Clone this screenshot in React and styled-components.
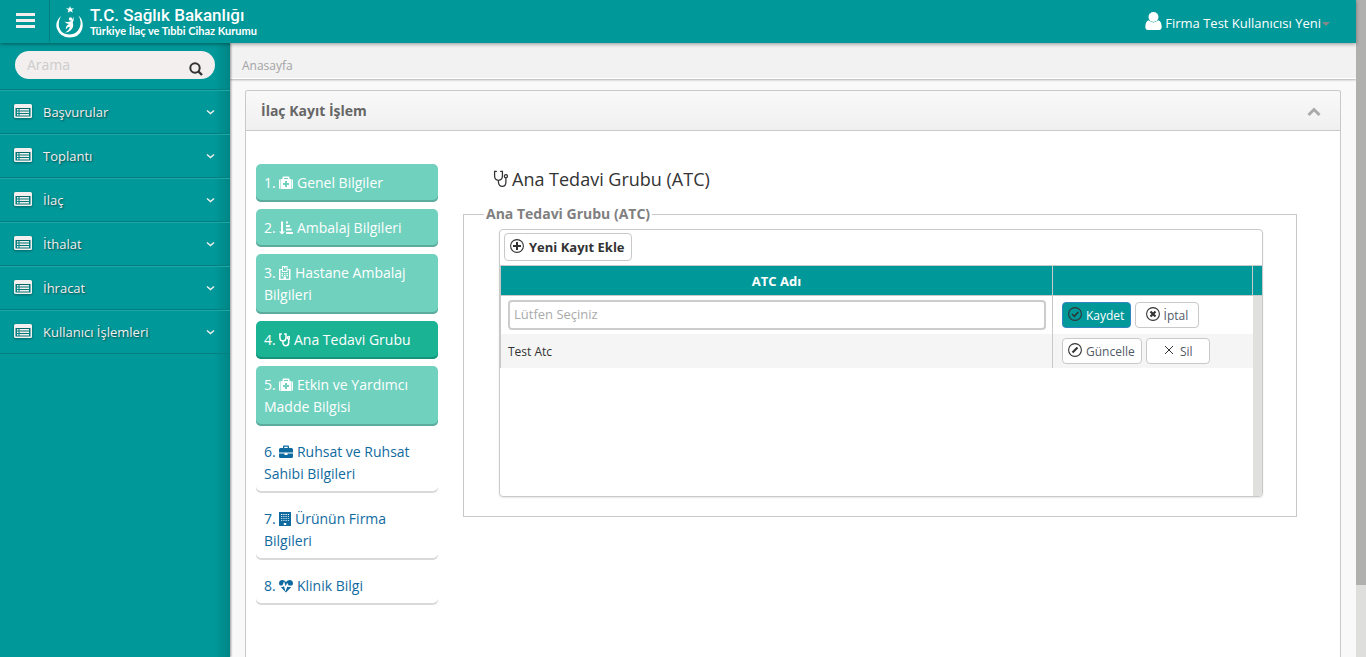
import React from "react";
import styled, { createGlobalStyle, css } from "styled-components";

const teal = "#009899";
const line = "#c9c9c9";

const GlobalStyle = createGlobalStyle`
  *, *::before, *::after { box-sizing: border-box; }
  html, body { margin: 0; overflow: hidden; }
  body, button, input {
    font-family: "Open Sans", "Noto Sans", sans-serif;
    font-size: 13px;
    color: #333;
  }
  a { color: inherit; text-decoration: none; }
  svg { display: block; flex: none; }
`;

const Window = styled.div`
  display: flex;
  height: 100vh;
  background: #f9f9f9;
`;

const Page = styled.div`
  flex: 1;
  min-width: 0;
  display: flex;
  flex-direction: column;
`;

const PageRail = styled.div`
  width: 10px;
  background: #dededc;
`;

const PageThumb = styled.div`
  height: 89%;
  background: #b0b0ae;
`;

const TopBar = styled.header`
  position: relative;
  z-index: 2;
  display: flex;
  align-items: center;
  height: 43px;
  flex: none;
  background: ${teal};
  box-shadow: 0 1px 4px rgba(0, 0, 0, 0.4);
  color: #fff;
`;

const MenuButton = styled.button`
  align-self: stretch;
  width: 50px;
  margin-bottom: 1px;
  padding: 0 0 1px 16px;
  border: 0;
  border-right: 1px solid #037f80;
  background: none;
`;

const Brand = styled.a`
  display: flex;
  align-items: center;
  gap: 6px;
  padding-left: 6px;
  white-space: nowrap;
`;

const BrandText = styled.span`
  display: flex;
  flex-direction: column;
`;

const BrandTitle = styled.span`
  font-family: Roboto, Arial, sans-serif;
  font-weight: 500;
  font-size: 17px;
  line-height: 18px;
`;

const BrandSub = styled.span`
  font-family: Lato, Arial, sans-serif;
  font-weight: 700;
  font-size: 11px;
  line-height: 14px;
`;

const UserButton = styled.button`
  display: flex;
  align-items: center;
  margin: 0 26px 0 auto;
  padding: 2px 0 0;
  gap: 3px;
  border: 0;
  background: none;
  color: #fff;
  line-height: 20px;
`;

const Caret = styled.span`
  margin: 3px 0 0 -2px;
  border: 4px solid transparent;
  border-top-color: #888;
  border-bottom: 0;
`;

const Shell = styled.div`
  flex: 1;
  min-height: 0;
  display: flex;
`;

const Sidebar = styled.aside`
  position: relative;
  z-index: 1;
  flex: none;
  width: 230px;
  background: linear-gradient(to left, #008586, ${teal} 16px);
  box-shadow: 1px 0 2px rgba(0, 0, 0, 0.4);
`;

const Search = styled.form`
  display: flex;
  align-items: center;
  height: 28px;
  margin: 8px 15px 10px;
  padding: 0 12px;
  border-radius: 14px;
  background: #f3efee;
`;

const SearchInput = styled.input`
  flex: 1;
  min-width: 0;
  padding: 0 0 2px;
  border: 0;
  outline: 0;
  background: none;
  font-size: 14px;
  &::placeholder { color: #ccc; }
`;

const SearchButton = styled.button`
  padding: 7px 0 0;
  border: 0;
  background: none;
`;

const SideMenu = styled.ul`
  margin: 0;
  padding: 0;
  list-style: none;
  border-top: 1px solid #047f80;
`;

const SideLink = styled.a`
  display: flex;
  align-items: center;
  gap: 11px;
  height: 44px;
  padding: 0 15px 0 14px;
  border-top: 1px solid #1aa6a6;
  border-bottom: 1px solid #047f80;
  color: #f3efee;
  text-shadow: 1px 1px 2px rgba(0, 0, 0, 0.5);
  span { flex: 1; }
  svg:first-child { margin-bottom: 3px; filter: drop-shadow(0 1px 1px rgba(0, 0, 0, 0.4)); }
`;

const Main = styled.main`
  flex: 1;
  min-width: 0;
  display: flex;
  flex-direction: column;
`;

const Breadcrumb = styled.nav`
  flex: none;
  height: 36px;
  padding: 13px 12px 0;
  line-height: 20px;
  font-size: 12px;
  color: #a3a3a3;
  background: #f2f2f2;
  border-bottom: 1px solid #fff;
  box-shadow: 0 1px 2px rgba(0, 0, 0, 0.3);
`;

const Panel = styled.section`
  flex: 1;
  margin: 11px 15px 0;
  border: 1px solid ${line};
  border-bottom: 0;
  border-radius: 3px 3px 0 0;
  background: #fff;
`;

const PanelHeader = styled.header`
  display: flex;
  align-items: center;
  justify-content: space-between;
  height: 40px;
  padding: 0 19px 0 15px;
  border-bottom: 1px solid ${line};
  border-radius: 3px 3px 0 0;
  background: linear-gradient(#f9f9f9, #f0f0f0);
`;

const PanelTitle = styled.h1`
  margin: 0;
  font-size: 14px;
  font-weight: 700;
  color: #666;
`;

const IconButton = styled.button`
  padding: 2px 0 0;
  border: 0;
  background: none;
`;

const PanelBody = styled.div`
  display: flex;
  gap: 25px;
  padding: 33px 43px 0 10px;
`;

const Steps = styled.ol`
  flex: none;
  width: 182px;
  margin: 0;
  padding: 0;
  list-style: none;
  display: flex;
  flex-direction: column;
  gap: 7px;
`;

const stepStates = {
  done: css`
    background: #70d1be;
    color: #fff;
    box-shadow: inset 0 -2px 0 #5cab9c;
  `,
  current: css`
    background: #1ab394;
    color: #fff;
    box-shadow: inset 0 -2px 0 #15937a;
  `,
  open: css`
    color: #0f6aa0;
    box-shadow: inset 0 -2px 0 #d9d9d9;
  `,
};

const StepLink = styled.a`
  display: block;
  padding: 8px;
  border-radius: 5px;
  font-size: 14px;
  line-height: 22px;
  ${(p) => stepStates[p.$state]}
  svg { display: inline-block; vertical-align: -2px; }
`;

const Content = styled.div`
  flex: 1;
  min-width: 0;
`;

const Heading = styled.h2`
  display: flex;
  align-items: center;
  gap: 4px;
  margin: 0 0 9px 30px;
  font-size: 18px;
  font-weight: 400;
  line-height: 30px;
`;

const Group = styled.fieldset`
  margin: 0;
  min-width: 0;
  padding: 4px 33px 19px 35px;
  border: 1px solid ${line};
`;

const GroupTitle = styled.legend`
  margin-left: -15px;
  padding: 0 2px;
  font-size: 14px;
  font-weight: 700;
  line-height: 22px;
  color: #808080;
`;

const Grid = styled.div`
  display: flex;
  flex-direction: column;
  border: 1px solid ${line};
  border-radius: 4px;
  overflow: hidden;
  min-height: 268px;
  box-shadow: 0 1px 2px rgba(0, 0, 0, 0.1);
`;

const Toolbar = styled.div`
  display: flex;
  height: 36px;
  padding: 3px 4px 4px;
  border-bottom: 1px solid ${line};
`;

const GridArea = styled.div`
  flex: 1;
  display: flex;
  align-items: stretch;
`;

const TableBox = styled.div`
  flex: 1;
  min-width: 0;
`;

const Table = styled.table`
  width: 100%;
  table-layout: fixed;
  border-collapse: separate;
  border-spacing: 0;
  border-left: 1px solid ${line};
  font-size: 12px;
`;

const ColumnHead = styled.th`
  width: ${(p) => p.$width || "auto"};
  height: 30px;
  padding: 0;
  border-right: 1px solid ${line};
  border-bottom: 1px solid ${line};
  background: ${teal};
  color: #fff;
  font-size: 13px;
  font-weight: 700;
`;

const Row = styled.tr`
  height: ${(p) => p.$height}px;
  background: ${(p) => (p.$alt ? "#f5f5f5" : "#fff")};
`;

const Cell = styled.td`
  padding: 0 6px 0 7px;
  border-right: ${(p) => (p.$last ? "0" : `1px solid ${line}`)};
`;

const Actions = styled.div`
  display: flex;
  gap: 4px;
  padding-left: 2px;
`;

const Picker = styled.input`
  display: block;
  width: 100%;
  height: 30px;
  padding: 0 4px 2px;
  border: 2px solid #ccc;
  border-radius: 4px;
  outline: 0;
  font-size: 13px;
  &::placeholder { color: #aaa; }
`;

const GridRail = styled.div`
  flex: none;
  width: 9px;
  background: #e0e0df;
`;

const GridRailHead = styled.div`
  height: 30px;
  background: ${teal};
  border-bottom: 1px solid ${line};
`;

const Button = styled.button`
  display: inline-flex;
  align-items: center;
  justify-content: center;
  gap: ${(p) => (p.$large ? 5 : 4)}px;
  height: ${(p) => (p.$large ? 28 : 26)}px;
  min-width: 64px;
  padding: 0 6px 0 5px;
  border: 1px solid ${(p) => (p.$primary ? "#2f86c0" : line)};
  border-radius: 4px;
  background: ${(p) => (p.$primary ? teal : "#fff")};
  color: ${(p) => (p.$primary ? "#fff" : p.$large ? "#333" : "#515967")};
  font-size: ${(p) => (p.$large ? 13 : 12)}px;
  font-weight: ${(p) => (p.$large ? 700 : 400)};
  white-space: nowrap;
  svg { margin-bottom: 2px; }
`;

const icons = {
  medkit: (
    <path fill="currentColor" fillRule="evenodd" d="M0 4.500Q0 3 1.500 3V13Q0 13 0 11.500ZM12.500 3Q14 3 14 4.500V11.500Q14 13 12.500 13ZM2 3H3.500V1.500Q3.500 0.500 4.500 0.500H9.500Q10.500 0.500 10.500 1.500V3H12V13H2ZM5 2V3H9V2ZM6 5V7H4V9H6V11H8V9H10V7H8V5Z" />
  ),
  sort: (
    <path fill="currentColor" d="M2 0.500H4V10.500H6L3 13.500L0 10.500H2ZM7 0.500H9V2.500H7ZM7 4H11V6H7ZM7 7.500H12.500V9.500H7ZM7 11H14V13H7Z" />
  ),
  hospital: (
    <path fill="currentColor" fillRule="evenodd" d="M3 0H8.500V3H11.500V14H0V3H3ZM4 1V5H7.500V1H6.500V2.500H5V1ZM1.500 4V12.700H4.500V10.500H7V12.700H10V4H8.500V6H3V4ZM2.500 7H4V8.200H2.500ZM5 7H6.500V8.200H5ZM7.500 7H9V8.200H7.500ZM2.500 9H4V10.200H2.500ZM5 9H6.500V10H5ZM7.500 9H9V10.200H7.500Z" />
  ),
  stethoscope: (
    <g fill="none" stroke="currentColor" strokeLinecap="round">
      <path d="M2.300 1H0.900V4.500Q0.900 8 3.900 8Q7 8 7 4.500V1H5.600M3.900 8V9.500Q4.200 12.700 6.900 12.700Q9.700 12.700 9.700 9.500V6.500" />
      <circle cx="9.700" cy="4.800" r="1.200" />
    </g>
  ),
  briefcase: (
    <path fill="currentColor" fillRule="evenodd" d="M4 3V1.500Q4 0.500 5 0.500H9Q10 0.500 10 1.500V3H12.500Q14 3 14 4.500V7.500H0V4.500Q0 3 1.500 3ZM5.300 1.800V3H8.700V1.800ZM0 8.500H5.500V10H8.500V8.500H14V11.500Q14 13 12.500 13H1.500Q0 13 0 11.500Z" />
  ),
  building: (
    <path fill="currentColor" fillRule="evenodd" d="M0 0H12V14H0ZM2 2V3H3.300V2ZM4.300 2V3H5.600V2ZM6.500 2V3H7.800V2ZM8.800 2V3H10V2ZM2 4.200V5H3.300V4.200ZM4.300 4.200V5H5.600V4.200ZM6.500 4.200V5H7.800V4.200ZM8.800 4.200V5H10V4.200ZM2 6.200V7H3.300V6.200ZM4.300 6.200V7H5.600V6.200ZM6.500 6.200V7H7.800V6.200ZM8.800 6.200V7H10V6.200ZM2 8.200V9H3.300V8.200ZM4.300 8.200V9H5.600V8.200ZM6.500 8.200V9H7.800V8.200ZM8.800 8.200V9H10V8.200ZM4.800 11V13H7.200V11Z" />
  ),
  heartbeat: (
    <>
      <path fill="currentColor" d="M7 13.500L1.500 7.700Q0 6 0 4.300Q0.300 1 3.400 1Q5.400 1 7 3Q8.600 1 10.600 1Q13.700 1 14 4.300Q14 6 12.500 7.700Z" />
      <path fill="none" stroke="#fff" d="M0 7.200H3.800L5 4.500L6.600 10L8.200 5.500L9.200 7.200H14" />
    </>
  ),
};

const iconWidths = { hospital: 12, building: 12, stethoscope: 11 };

const StepIcon = ({ name }) => {
  const w = iconWidths[name] || 14;
  return (
    <svg width={w} height="14" viewBox={`0 0 ${w} 14`} strokeWidth="1.500" aria-hidden="true">
      {icons[name]}
    </svg>
  );
};

const ListIcon = () => (
  <svg width="18" height="14" viewBox="0 0 18 14" aria-hidden="true">
    <path fill="#f3efee" fillRule="evenodd" d="M1.500 0H16.500Q18 0 18 1.500V12.500Q18 14 16.500 14H1.500Q0 14 0 12.500V1.500Q0 0 1.500 0ZM1.500 4V12.500H16.500V4ZM3 5H4.500V6.500H3ZM5.500 5H15V6.500H5.500ZM3 7.500H4.500V9H3ZM5.500 7.500H15V9H5.500ZM3 10H4.500V11.500H3ZM5.500 10H15V11.500H5.500Z" />
  </svg>
);

const RoundIcon = ({ children }) => (
  <svg width="14" height="14" viewBox="0 0 14 14" fill="none" stroke="#333" aria-hidden="true">
    <circle cx="7" cy="7" r="6.400" strokeWidth="1.100" />
    {children}
  </svg>
);

const Emblem = () => (
  <svg width="28" height="34" viewBox="0 0 28 34" fill="#fff" aria-hidden="true">
    <path d="M14 1L15 3.500L18 3.300L15.900 5L17 7.600L14.300 6.200L11.700 7.800L12.400 5L10 3.300L13 3.500Z" />
    <path d="M5 11Q-1.500 17 1 24Q4.500 32.500 13.500 32.500Q23 32.500 26 24.500Q28.500 16 22.500 10.500Q26 16.500 23.700 22.500Q20.500 29.500 13.500 29.500Q5.500 29.500 3.200 22.500Q1.800 16.500 5 11Z" />
    <circle cx="14.500" cy="14" r="1.700" />
    <path d="M8.500 16.500Q12 17.700 14.800 16.300Q16.800 15 17.300 11.500Q18.300 15 16.700 17.500Q18.300 21.500 15 25Q12 27.800 9 27.500Q13.500 25.500 13.800 21.800Q11.700 21.500 9.800 24.500Q9.500 20.500 13 19Q10 18.800 8.500 16.500Z" />
  </svg>
);

const menu = ["Başvurular", "Toplantı", "İlaç", "İthalat", "İhracat", "Kullanıcı İşlemleri"];

const steps = [
  ["medkit", "Genel Bilgiler", "done"],
  ["sort", "Ambalaj Bilgileri", "done"],
  ["hospital", "Hastane Ambalaj Bilgileri", "done"],
  ["stethoscope", "Ana Tedavi Grubu", "current"],
  ["medkit", "Etkin ve Yardımcı Madde Bilgisi", "done"],
  ["briefcase", "Ruhsat ve Ruhsat Sahibi Bilgileri", "open"],
  ["building", "Ürünün Firma Bilgileri", "open"],
  ["heartbeat", "Klinik Bilgi", "open"],
];

export default function App() {
  return (
    <Window>
      <GlobalStyle />
      <Page>
        <TopBar>
          <MenuButton type="button" aria-label="Menü">
            <svg width="19" height="15" viewBox="0 0 19 15" fill="#f3efee">
              <path d="M0 0H19V3H0ZM0 6H19V9H0ZM0 12H19V15H0Z" />
            </svg>
          </MenuButton>
          <Brand href="#">
            <Emblem />
            <BrandText>
              <BrandTitle>T.C. Sağlık Bakanlığı</BrandTitle>
              <BrandSub>Türkiye İlaç ve Tıbbi Cihaz Kurumu</BrandSub>
            </BrandText>
          </Brand>
          <UserButton type="button">
            <svg width="17" height="22" viewBox="0 0 17 22" fill="#fff" aria-hidden="true">
              <circle cx="8.500" cy="5" r="5" />
              <path d="M3.800 8.300Q8.500 12.500 13.200 8.300Q16.500 9 16.700 15Q16.500 18 14 18H3Q0.500 18 0.300 15Q0.500 9 3.800 8.300Z" />
            </svg>
            <span>Firma Test Kullanıcısı Yeni</span>
            <Caret />
          </UserButton>
        </TopBar>
        <Shell>
          <Sidebar>
            <Search>
              <SearchInput type="text" placeholder="Arama" aria-label="Arama" />
              <SearchButton type="button" aria-label="Ara">
                <svg width="14" height="14" viewBox="0 0 14 14" fill="none" stroke="#333">
                  <circle cx="6" cy="6" r="4.700" strokeWidth="2" />
                  <path d="M9.500 9.500L13 13" strokeWidth="2.400" />
                </svg>
              </SearchButton>
            </Search>
            <SideMenu>
              {menu.map((label) => (
                <li key={label}>
                  <SideLink href="#">
                    <ListIcon />
                    <span>{label}</span>
                    <svg width="9" height="6" viewBox="0 0 9 6" fill="none" stroke="#f3efee" aria-hidden="true">
                      <path d="M1 1.500L4.500 4.500L8 1.500" strokeWidth="1.500" />
                    </svg>
                  </SideLink>
                </li>
              ))}
            </SideMenu>
          </Sidebar>
          <Main>
            <Breadcrumb>
              <a href="#">Anasayfa</a>
            </Breadcrumb>
            <Panel>
              <PanelHeader>
                <PanelTitle>İlaç Kayıt İşlem</PanelTitle>
                <IconButton type="button" aria-label="Daralt">
                  <svg width="14" height="10" viewBox="0 0 14 10" fill="none" stroke="#aaa">
                    <path d="M1.500 8L7 2.500L12.500 8" strokeWidth="3" />
                  </svg>
                </IconButton>
              </PanelHeader>
              <PanelBody>
                <Steps>
                  {steps.map(([icon, label, state], i) => (
                    <li key={label}>
                      <StepLink href="#" $state={state}>
                        {`${i + 1}. `}
                        <StepIcon name={icon} />
                        {` ${label}`}
                      </StepLink>
                    </li>
                  ))}
                </Steps>
                <Content>
                  <Heading>
                    <svg width="15" height="18" viewBox="0 0 11 14" strokeWidth="1" aria-hidden="true">
                      {icons.stethoscope}
                    </svg>
                    Ana Tedavi Grubu (ATC)
                  </Heading>
                  <Group>
                    <GroupTitle>Ana Tedavi Grubu (ATC)</GroupTitle>
                    <Grid>
                      <Toolbar>
                        <Button type="button" $large>
                          <RoundIcon>
                            <path d="M7 3V11M3 7H11" strokeWidth="2" />
                          </RoundIcon>
                          Yeni Kayıt Ekle
                        </Button>
                      </Toolbar>
                      <GridArea>
                        <TableBox>
                          <Table>
                            <thead>
                              <tr>
                                <ColumnHead scope="col">ATC Adı</ColumnHead>
                                <ColumnHead scope="col" $width="200px" aria-label="İşlemler" />
                              </tr>
                            </thead>
                            <tbody>
                              <Row $height={38}>
                                <Cell>
                                  <Picker type="text" placeholder="Lütfen Seçiniz" aria-label="ATC Adı" />
                                </Cell>
                                <Cell $last>
                                  <Actions>
                                    <Button type="button" $primary>
                                      <RoundIcon>
                                        <path d="M4 7L6.300 9.300L10.300 5" strokeWidth="1.500" />
                                      </RoundIcon>
                                      Kaydet
                                    </Button>
                                    <Button type="button">
                                      <RoundIcon>
                                        <path d="M4.500 4.500L9.500 9.500M9.500 4.500L4.500 9.500" strokeWidth="2.200" />
                                      </RoundIcon>
                                      İptal
                                    </Button>
                                  </Actions>
                                </Cell>
                              </Row>
                              <Row $height={34} $alt>
                                <Cell>Test Atc</Cell>
                                <Cell $last>
                                  <Actions>
                                    <Button type="button">
                                      <RoundIcon>
                                        <path d="M4.500 9.500L9.500 4.500" strokeWidth="2.200" />
                                      </RoundIcon>
                                      Güncelle
                                    </Button>
                                    <Button type="button">
                                      <svg width="14" height="10" viewBox="0 0 14 10" fill="none" stroke="#333" aria-hidden="true">
                                        <path d="M3 1L11 9M11 1L3 9" />
                                      </svg>
                                      Sil
                                    </Button>
                                  </Actions>
                                </Cell>
                              </Row>
                            </tbody>
                          </Table>
                        </TableBox>
                        <GridRail>
                          <GridRailHead />
                        </GridRail>
                      </GridArea>
                    </Grid>
                  </Group>
                </Content>
              </PanelBody>
            </Panel>
          </Main>
        </Shell>
      </Page>
      <PageRail>
        <PageThumb />
      </PageRail>
    </Window>
  );
}
